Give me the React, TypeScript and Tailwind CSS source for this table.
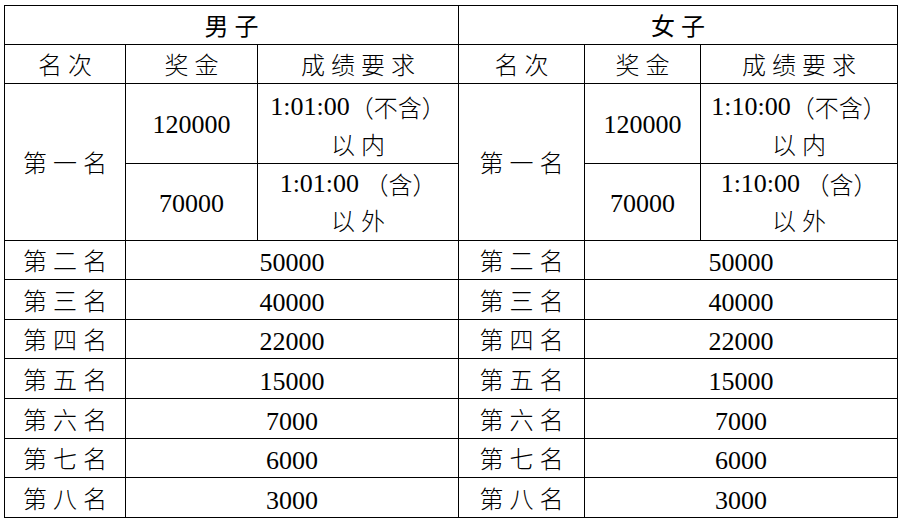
type Half = {
  title: string
  time: string
}

const halves: Half[] = [
  { title: '男子', time: '1:01:00' },
  { title: '女子', time: '1:10:00' },
]

const ranks = [
  { name: '第二名', prize: '50000', h: 'h-[39px]' },
  { name: '第三名', prize: '40000', h: 'h-[40px]' },
  { name: '第四名', prize: '22000', h: 'h-[39px]' },
  { name: '第五名', prize: '15000', h: 'h-[40px]' },
  { name: '第六名', prize: '7000', h: 'h-[40px]' },
  { name: '第七名', prize: '6000', h: 'h-[39px]' },
  { name: '第八名', prize: '3000', h: 'h-[40px]' },
]

const cell = 'border border-black text-center align-middle p-0 leading-none'

function Cjk({ children }: { children: string }) {
  return (
    <span className="font-['Noto_Sans_CJK_SC',sans-serif] font-light text-[24px] leading-none tracking-[6px] pl-[6px]">
      {children}
    </span>
  )
}

function Num({ children }: { children: string }) {
  return <span className="font-['Liberation_Serif',serif] text-[26px] leading-none">{children}</span>
}

function Paren({ children }: { children: string }) {
  return (
    <span className="font-['Noto_Sans_CJK_SC',sans-serif] font-light text-[24px] leading-none">{children}</span>
  )
}

function Line({ children, className = '' }: { children: React.ReactNode; className?: string }) {
  return <div className={`flex items-center justify-center ${className}`}>{children}</div>
}

export default function App() {
  return (
    <div className="min-h-screen bg-white pl-[4px] pt-[5px] text-black">
      <table className="table-fixed border-collapse w-[893px]">
        <colgroup>
          <col className="w-[121px]" />
          <col className="w-[132px]" />
          <col className="w-[201px]" />
          <col className="w-[126px]" />
          <col className="w-[116px]" />
          <col className="w-[197px]" />
        </colgroup>
        <tbody>
          <tr className="h-[39px]">
            {halves.map((h) => (
              <td key={h.title} colSpan={3} className={cell}>
                <span className="font-['Noto_Sans_CJK_SC',sans-serif] font-normal text-[24px] leading-none tracking-[6px] pl-[6px]">
                  {h.title}
                </span>
              </td>
            ))}
          </tr>
          <tr className="h-[39px]">
            {halves.map((h) => (
              <>
                <td key={h.title + 'a'} className={cell}><Cjk>名次</Cjk></td>
                <td key={h.title + 'b'} className={cell}><Cjk>奖金</Cjk></td>
                <td key={h.title + 'c'} className={cell}><Cjk>成绩要求</Cjk></td>
              </>
            ))}
          </tr>
          <tr className="h-[80px]">
            {halves.map((h) => (
              <>
                <td key={h.title + 'r'} rowSpan={2} className={cell}><Cjk>第一名</Cjk></td>
                <td key={h.title + 'p'} className={`${cell} pt-[3px]`}><Num>120000</Num></td>
                <td key={h.title + 'q'} className={cell}>
                  <div className="flex flex-col pt-[4px]">
                    <Line className="h-[37px]">
                      <Num>{h.time}</Num>
                      <Paren>（不含）</Paren>
                    </Line>
                    <Line className="h-[37px]"><Cjk>以内</Cjk></Line>
                  </div>
                </td>
              </>
            ))}
          </tr>
          <tr className="h-[77px]">
            {halves.map((h) => (
              <>
                <td key={h.title + 'p2'} className={`${cell} pt-[4px]`}><Num>70000</Num></td>
                <td key={h.title + 'q2'} className={cell}>
                  <div className="flex flex-col">
                    <Line className="h-[36px]">
                      <Num>{h.time}</Num>
                      <Paren>{'\u00a0（含）'}</Paren>
                    </Line>
                    <Line className="h-[36px]"><Cjk>以外</Cjk></Line>
                  </div>
                </td>
              </>
            ))}
          </tr>
          {ranks.map((r) => (
            <tr key={r.name} className={r.h}>
              {halves.map((h) => (
                <>
                  <td key={h.title + r.name} className={cell}><Cjk>{r.name}</Cjk></td>
                  <td key={h.title + r.name + 'v'} colSpan={2} className={`${cell} pt-[6px]`}>
                    <Num>{r.prize}</Num>
                  </td>
                </>
              ))}
            </tr>
          ))}
        </tbody>
      </table>
    </div>
  )
}
